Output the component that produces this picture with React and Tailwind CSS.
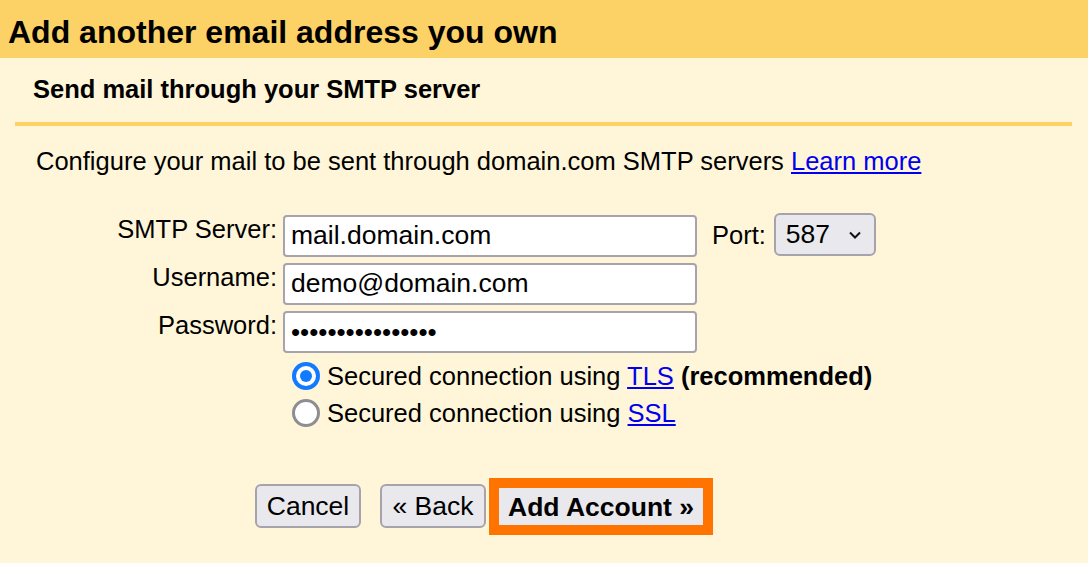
import React from "react";

const font = { fontFamily: '"Liberation Sans", Arial, sans-serif' };

export default function App() {
  return (
    <div className="w-[1088px] h-[563px] bg-[#fff6d9] text-black overflow-hidden" style={font}>
      {/* ── Title band ─────────────────────────────────── */}
      <div className="h-[58px] bg-[#fcd166] flex items-center pl-[8px] pt-[5px]">
        <h1 className="text-[32px] font-bold leading-none">Add another email address you own</h1>
      </div>

      {/* ── Section heading ────────────────────────────── */}
      <div className="mx-[15px] mr-[16px] border-b-4 border-[#fcd166] h-[68px] flex items-center pl-[18px]">
        <h2 className="text-[25.5px] font-bold leading-none">Send mail through your SMTP server</h2>
      </div>

      <p className="pl-[36px] pt-[23px] text-[25.5px] leading-none">
        Configure your mail to be sent through domain.com SMTP servers{" "}
        <a href="#" className="text-[#0000ee] underline">Learn more</a>
      </p>

      {/* ── Form ───────────────────────────────────────── */}
      <div className="mt-[40px] grid grid-cols-[283px_auto] gap-y-[6px] text-[25.5px]">
        <label className="text-right pr-[6px] pt-[2px] leading-none">SMTP Server:</label>
        <div className="flex items-center">
          <input
            readOnly
            value="mail.domain.com"
            className="w-[414px] h-[42px] bg-white border-2 border-[#a6a3ad] rounded-[4px] px-[6px] text-[26.5px] outline-none"
            style={font}
          />
          <span className="ml-[15px]">Port:</span>
          <div className="ml-[8px] w-[102px] h-[43px] bg-[#e9e8ed] border-2 border-[#a6a3ad] rounded-[6px] flex items-center pl-[10px] pr-[12px] -mt-[2px]">
            <span className="text-[26.5px] flex-1 leading-none">587</span>
            <svg width="14" height="10" viewBox="0 0 14 10">
              <path d="M2 2.5 L7 7.5 L12 2.5" stroke="#111" strokeWidth="2" fill="none" />
            </svg>
          </div>
        </div>

        <label className="text-right pr-[6px] pt-[2px] leading-none">Username:</label>
        <div>
          <input
            readOnly
            value="demo@domain.com"
            className="w-[414px] h-[42px] bg-white border-2 border-[#a6a3ad] rounded-[4px] px-[6px] text-[26.5px] outline-none"
            style={font}
          />
        </div>

        <label className="text-right pr-[6px] pt-[2px] leading-none">Password:</label>
        <div>
          <div className="w-[414px] h-[42px] bg-white border-2 border-[#a6a3ad] rounded-[4px] px-[6px] flex items-center text-[26px] leading-none">
            ••••••••••••••••
          </div>
        </div>
      </div>

      {/* ── Security options ───────────────────────────── */}
      <div className="ml-[292px] mt-[9px] flex flex-col gap-[8px] text-[25.5px] leading-[29px]">
        <label className="flex items-center">
          <span className="w-[28px] h-[28px] rounded-full bg-[#117aff] mr-[7px] flex items-center justify-center">
            <span className="w-[20px] h-[20px] rounded-full bg-white flex items-center justify-center">
              <span className="w-[12px] h-[12px] rounded-full bg-[#117aff]" />
            </span>
          </span>
          <span>
            Secured connection using <a href="#" className="text-[#0000ee] underline">TLS</a>{" "}
            <b>(recommended)</b>
          </span>
        </label>
        <label className="flex items-center">
          <span className="w-[28px] h-[28px] rounded-full border-[3.5px] border-[#8e8d93] bg-white mr-[7px]" />
          <span>
            Secured connection using <a href="#" className="text-[#0000ee] underline">SSL</a>
          </span>
        </label>
      </div>

      {/* ── Buttons ────────────────────────────────────── */}
      <div className="ml-[255px] mt-[50px] flex items-center text-[26.5px]">
        <button className="w-[106px] h-[44px] bg-[#e9e8ed] border-2 border-[#a6a3ad] rounded-[6px] leading-none" style={font}>
          Cancel
        </button>
        <button className="ml-[19px] w-[106px] h-[44px] bg-[#e9e8ed] border-2 border-[#a6a3ad] rounded-[6px] leading-none" style={font}>
          « Back
        </button>
        <div className="ml-[3px] w-[224px] h-[57px] border-[10px] border-[#ff7300]">
          <button className="w-full h-full bg-[#e9e8ed] font-bold leading-none" style={font}>
            Add Account »
          </button>
        </div>
      </div>
    </div>
  );
}
